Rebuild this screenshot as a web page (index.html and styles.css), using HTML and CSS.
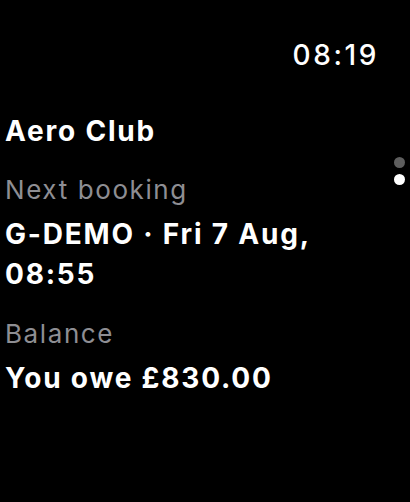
FILE: index.html
```html
<!DOCTYPE html>
<html lang="en">

<head>
    <meta charset="UTF-8">
    <meta name="viewport" content="width=device-width, initial-scale=1.0">
    <title>Aero Club</title>
    <link rel="stylesheet" href="styles.css">
</head>

<body>

    <div class="screen">
        <div class="clock">08:19</div>

        <div class="content">
            <h1 class="title">Aero Club</h1>

            <div class="section">
                <p class="label">Next booking</p>
                <p class="value">G-DEMO · Fri 7 Aug, 08:55</p>
            </div>

            <div class="section">
                <p class="label">Balance</p>
                <p class="value">You owe £830.00</p>
            </div>
        </div>

        <div class="pager">
            <span class="dot"></span>
            <span class="dot active"></span>
        </div>
    </div>

</body>

</html>
```

FILE: styles.css
```css
body {
    margin: 0;
    background: #000;
    font-family: Inter, "Noto Sans", sans-serif;
    color: #fff;
}

.screen {
    position: relative;
    width: 410px;
    height: 502px;
    overflow: hidden;
}

.clock {
    padding: 35px 31px 0 0;
    text-align: right;
    font-size: 28px;
    line-height: 40px;
    font-weight: 500;
    letter-spacing: 2.6px;
}

.content {
    width: 340px;
    padding: 36px 0 0 5px;
}

.title {
    margin: 0;
    font-size: 28px;
    line-height: 40px;
    font-weight: 700;
    letter-spacing: 1.8px;
}

.section {
    margin-top: 19px;
}

.section + .section {
    margin-top: 20px;
}

.label {
    margin: 0;
    font-size: 26px;
    line-height: 40px;
    color: #8e8e93;
    letter-spacing: 1.6px;
}

.value {
    margin: 4px 0 0;
    font-size: 28px;
    line-height: 40px;
    font-weight: 700;
    letter-spacing: 1.8px;
}

.pager {
    position: absolute;
    top: 157px;
    right: 5px;
    display: flex;
    flex-direction: column;
    gap: 6px;
}

.dot {
    width: 11px;
    height: 11px;
    border-radius: 50%;
    background: #5e5e5e;
}

.dot.active {
    background: #fff;
}
```
